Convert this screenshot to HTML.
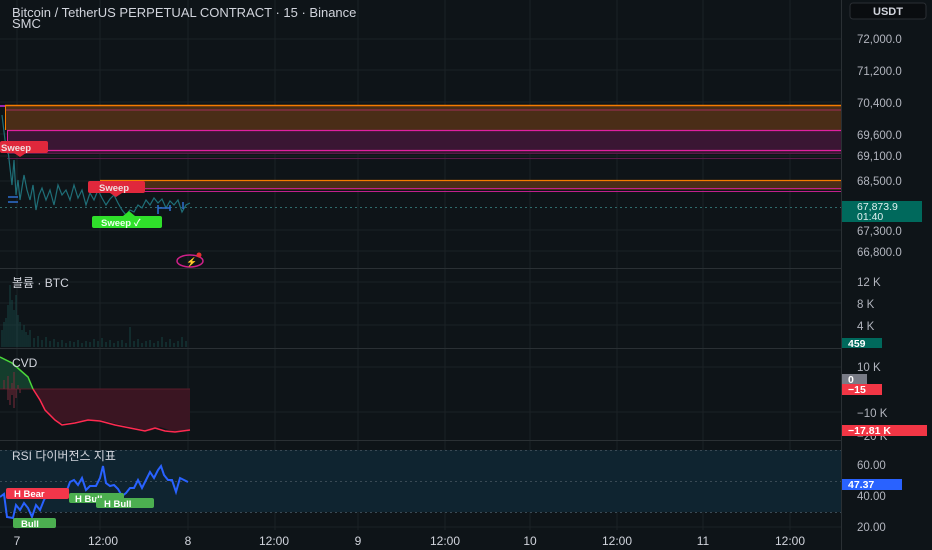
<!DOCTYPE html>
<html><head><meta charset="utf-8"><style>
body{margin:0;width:932px;height:550px;overflow:hidden;background:#0e1418;font-family:"Liberation Sans","Noto Sans CJK KR",sans-serif}
svg{position:absolute;left:0;top:0}
</style></head><body>
<svg width="932" height="550" viewBox="0 0 932 550" font-family="Liberation Sans, Noto Sans CJK KR, sans-serif">
<rect width="932" height="550" fill="#0e1418"/>
<g stroke="#1b2226" stroke-width="1">
<path d="M17 0V530M100 0V530M188 0V530M275 0V530M358 0V530M445 0V530M530 0V530M617 0V530M703 0V530M790 0V530"/>
<path d="M0 39H841M0 70H841M0 102H841M0 134H841M0 156H841M0 181H841M0 230H841M0 251H841"/>
<path d="M0 282H841M0 303H841M0 325H841M0 367H841M0 412H841M0 527H841"/>
</g>
<g stroke="#2a3034"><path d="M0 268.5H932M0 348.5H932M0 440.5H932M841.5 0V550"/></g>
<rect x="5" y="105" width="836" height="25" fill="#4a2d17"/>
<path d="M5 105.5H841" stroke="#f57c00" stroke-width="1.5"/>
<path d="M5 110H841" stroke="#a0305a" stroke-width="1"/>
<path d="M5.5 105V130" stroke="#f57c00"/>
<rect x="7" y="130" width="834" height="23" fill="#3a1633"/>
<path d="M7 130.5H841M7 150.5H841" stroke="#e020a0" stroke-width="1.2"/>
<path d="M7 153.5H841M7 158.5H841" stroke="#5a1a4a"/>
<path d="M7.5 130V150" stroke="#e020a0"/>
<rect x="0" y="105" width="5" height="2" fill="#9c27b0"/>
<rect x="100" y="180" width="741" height="10" fill="#4a2d17"/>
<path d="M100 180.5H841" stroke="#f57c00" stroke-width="1.2"/>
<path d="M100 188.5H841M100 191.5H841" stroke="#c0208a"/>
<path d="M0 207.5H841" stroke="#2e6b6b" stroke-dasharray="2 3"/>
<polyline fill="none" stroke="#1f6f78" stroke-width="1.2" points="2,115 5,140 8,150 10,168 12,185 14,160 16,195 18,180 20,200 24,175 27,190 30,200 33,185 36,210 39,195 42,188 46,200 50,190 54,205 58,185 62,195 66,190 70,200 74,185 78,198 82,190 86,205 90,193 94,200 98,190 102,198 106,205 110,199 114,195 118,203 122,210 126,215 130,210 134,212 138,205 142,208 146,200 150,205 154,198 158,203 162,199 166,208 170,201 174,205 178,200 182,212 186,205 190,203"/>
<path d="M8 197H18M8 202H18" stroke="#2f6fd0" stroke-width="1.5"/>
<path d="M158 205V214M158 208H170M170 205V211M183 202V209" stroke="#2f6fd0" stroke-width="1.5"/>
<rect x="0" y="141" width="48" height="12" rx="2" fill="#e0283c"/>
<path d="M14 153L20 157L26 153Z" fill="#e0283c"/>
<text x="1" y="151" font-size="9.5" fill="#f0dede" font-weight="bold">Sweep</text>
<rect x="88" y="181" width="57" height="12" rx="2" fill="#e0283c"/>
<path d="M110 193L116 197L122 193Z" fill="#e0283c"/>
<text x="99" y="191" font-size="9.5" fill="#f0dede" font-weight="bold">Sweep</text>
<rect x="92" y="216" width="70" height="12" rx="2" fill="#2fe02a"/>
<path d="M123 216L129 211L135 216Z" fill="#2fe02a"/>
<text x="101" y="226" font-size="9.5" fill="#eaffea" font-weight="bold">Sweep ✓</text>
<ellipse cx="190" cy="261" rx="13" ry="6" fill="none" stroke="#d0208a" stroke-width="1.5"/>
<text x="186" y="265" font-size="9" fill="#d0208a" font-weight="bold">⚡</text>
<circle cx="199" cy="255" r="2.5" fill="#e03030"/>
<text x="12" y="17" font-size="13" fill="#d1d4dc">Bitcoin / TetherUS PERPETUAL CONTRACT · 15 · Binance</text>
<text x="12" y="28" font-size="13" fill="#d1d4dc">SMC</text>
<g stroke="#1a4f4e" stroke-width="0.8">
<path d="M2 347V330M4 347V322M6 347V318M8 347V305M10 347V285M12 347V300M14 347V310M16 347V295M18 347V315M20 347V322M22 347V330M24 347V325M26 347V332M28 347V335M30 347V330M34 347V338M38 347V336M42 347V340M46 347V337M50 347V341M54 347V339M58 347V342M62 347V340M66 347V343M70 347V341M74 347V342M78 347V340M82 347V343M86 347V341M90 347V342M94 347V339M98 347V341M102 347V338M106 347V342M110 347V340M114 347V343M118 347V341M122 347V340M126 347V343M130 347V327M134 347V341M138 347V339M142 347V343M146 347V341M150 347V340M154 347V343M158 347V341M162 347V337M166 347V342M170 347V339M174 347V343M178 347V341M182 347V337M186 347V341"/>
</g>
<text x="12" y="287" font-size="12" fill="#d1d4dc">볼륨 · BTC</text>
<path d="M0 357L12 363L20 370L28 377L33 389L0 389Z" fill="#143d2c"/>
<path d="M33 389L45 410L60 423L80 421L100 420L130 427L150 431L160 427L175 432L190 430L190 389Z" fill="#3a1522"/>
<path d="M0 389H190" stroke="#5a1d2a"/>
<path d="M8 389V400M10 389V405M12 389V395M14 389V408M16 389V398M20 389V393M4 389V380M8 389V376M12 389V383M14 389V372M18 389V385" stroke="#7a2a3a"/>
<polyline fill="none" stroke="#4ad63a" stroke-width="1.5" points="0,357 12,363 20,370 28,377 33,389"/>
<polyline fill="none" stroke="#ff2a50" stroke-width="1.5" points="33,389 40,400 45,410 55,420 62,425 75,423 88,420 100,421 115,425 130,428 145,431 155,428 165,431 175,432 190,430"/>
<text x="12" y="367" font-size="12" fill="#d1d4dc">CVD</text>
<rect x="0" y="450" width="841" height="62" fill="#0f2430"/>
<path d="M0 450.5H841M0 481.5H841M0 512.5H841" stroke="#3a4a55" stroke-dasharray="2 3"/>
<text x="12" y="460" font-size="12" fill="#d1d4dc">RSI 다이버전스 지표</text>
<polyline fill="none" stroke="#2962ff" stroke-width="2" points="0,497 4,494 7,517 13,518 16,505 20,510 24,503 28,508 32,517 36,505 40,510 44,500 48,493 52,490 56,492 60,490 66,493 70,482 74,480 78,485 82,478 86,490 90,486 96,486 100,478 103,466 106,483 110,486 114,485 118,489 122,496 126,493 130,488 134,488 138,480 142,488 146,480 150,472 154,478 158,470 161,466 164,475 168,480 172,480 176,492 180,478 184,480 188,482"/>
<rect x="6" y="488" width="63" height="11" rx="2" fill="#f2364a"/>
<text x="14" y="497" font-size="9.5" fill="#fff" font-weight="bold">H Bear</text>
<rect x="13" y="518" width="43" height="10" rx="2" fill="#4caf50"/>
<text x="21" y="527" font-size="9.5" fill="#fff" font-weight="bold">Bull</text>
<rect x="69" y="493" width="55" height="10" rx="2" fill="#4caf50"/>
<text x="75" y="502" font-size="9.5" fill="#fff" font-weight="bold">H Bull</text>
<rect x="96" y="498" width="58" height="10" rx="2" fill="#4caf50"/>
<text x="104" y="507" font-size="9.5" fill="#fff" font-weight="bold">H Bull</text>
<g font-size="12" fill="#d1d4dc" text-anchor="middle">
<text x="17" y="545">7</text><text x="103" y="545">12:00</text><text x="188" y="545">8</text><text x="274" y="545">12:00</text><text x="358" y="545">9</text><text x="445" y="545">12:00</text><text x="530" y="545">10</text><text x="617" y="545">12:00</text><text x="703" y="545">11</text><text x="790" y="545">12:00</text>
</g>
<rect x="842" y="0" width="90" height="550" fill="#0e1418"/>
<rect x="850" y="3" width="76" height="16" rx="3" fill="#0a0d10" stroke="#2a2e33"/>
<text x="888" y="15" font-size="11" fill="#d1d4dc" text-anchor="middle" font-weight="bold">USDT</text>
<g font-size="11.5" fill="#b2b5be">
<text x="857" y="43">72,000.0</text><text x="857" y="75">71,200.0</text><text x="857" y="107">70,400.0</text><text x="857" y="139">69,600.0</text><text x="857" y="160">69,100.0</text><text x="857" y="185">68,500.0</text><text x="857" y="235">67,300.0</text><text x="857" y="256">66,800.0</text>
<text x="857" y="286">12 K</text><text x="857" y="308">8 K</text><text x="857" y="330">4 K</text>
<text x="857" y="371">10 K</text><text x="857" y="417">−10 K</text><text x="857" y="440">−20 K</text>
<text x="857" y="469">60.00</text><text x="857" y="500">40.00</text><text x="857" y="531">20.00</text>
</g>
<rect x="842" y="201" width="80" height="21" fill="#00695c"/>
<text x="857" y="210" font-size="10.5" fill="#e0f2f1">67,873.9</text>
<text x="857" y="220" font-size="10.5" fill="#e0f2f1">01:40</text>
<rect x="842" y="338" width="40" height="10" fill="#00695c"/>
<text x="848" y="347" font-size="10.5" fill="#fff" font-weight="bold">459</text>
<rect x="842" y="374" width="25" height="10" fill="#787b86"/>
<text x="848" y="383" font-size="10.5" fill="#fff" font-weight="bold">0</text>
<rect x="842" y="384" width="40" height="11" fill="#f23645"/>
<text x="848" y="393" font-size="10.5" fill="#fff" font-weight="bold">−15</text>
<rect x="842" y="425" width="85" height="11" fill="#f23645"/>
<text x="848" y="434" font-size="10.5" fill="#fff" font-weight="bold">−17.81 K</text>
<rect x="842" y="479" width="60" height="11" fill="#2962ff"/>
<text x="848" y="488" font-size="10.5" fill="#fff" font-weight="bold">47.37</text>
</svg>
</body></html>
